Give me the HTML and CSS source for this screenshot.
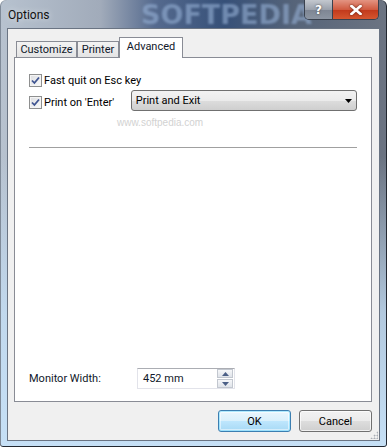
FILE: index.html
```html
<!DOCTYPE html>
<html lang="en">
<head>
    <meta charset="UTF-8">
    <title>Options</title>
    <link rel="stylesheet" href="styles.css">
</head>
<body>
    <div class="window">
        <div class="titlebar">
            <span class="title">Options</span>
            <span class="title-mark">SOFTPEDIA</span>
            <div class="caption-btns">
                <span class="cap-btn help">?</span>
                <span class="cap-btn close">
                    <svg width="12" height="10" viewBox="0 0 12 10"><path d="M1.5 1 L10.5 9 M10.5 1 L1.5 9" stroke="#fff" stroke-width="2.6" stroke-linecap="square"/></svg>
                </span>
            </div>
        </div>

        <div class="client">
            <div class="tabs">
                <div class="tab">Customize</div>
                <div class="tab">Printer</div>
                <div class="tab active">Advanced</div>
            </div>

            <div class="panel">
                <label class="check-row first">
                    <span class="checkbox"><svg width="9" height="9" viewBox="0 0 9 9"><path d="M1 4.5 L3.4 7 L8 1.5" fill="none" stroke="#3f5491" stroke-width="1.8"/></svg></span>
                    Fast quit on Esc key
                </label>
                <div class="enter-row">
                    <label class="check-row enter-label">
                        <span class="checkbox"><svg width="9" height="9" viewBox="0 0 9 9"><path d="M1 4.5 L3.4 7 L8 1.5" fill="none" stroke="#3f5491" stroke-width="1.8"/></svg></span>
                        Print on 'Enter'
                    </label>
                    <div class="combo">
                        <span>Print and Exit</span>
                        <svg class="combo-arrow" width="7" height="4" viewBox="0 0 7 4"><path d="M0 0 H7 L3.5 4 Z" fill="#000"/></svg>
                    </div>
                </div>
                <span class="mark-url">www.softpedia.com</span>
                <div class="separator"></div>
                <div class="width-row">
                    <span class="width-label">Monitor Width:</span>
                    <div class="spin">
                        <span class="spin-value">452 mm</span>
                        <div class="spin-btns">
                            <span class="spin-btn"><svg width="7" height="4" viewBox="0 0 7 4"><path d="M0 4 H7 L3.5 0 Z" fill="#4b5f86"/></svg></span>
                            <span class="spin-btn"><svg width="7" height="4" viewBox="0 0 7 4"><path d="M0 0 H7 L3.5 4 Z" fill="#4b5f86"/></svg></span>
                        </div>
                    </div>
                </div>
            </div>

            <div class="buttons">
                <button class="btn default">OK</button>
                <button class="btn">Cancel</button>
            </div>
            <span class="grip"></span>
        </div>
    </div>
</body>
</html>
```

FILE: styles.css
```css
* {
    margin: 0;
    padding: 0;
    box-sizing: border-box;
}

body {
    width: 387px;
    height: 447px;
    overflow: hidden;
    font-family: Roboto, "Liberation Sans", sans-serif;
    font-size: 11px;
    color: #000;
    background: #fff;
}

/* window frame */
.window {
    width: 387px;
    height: 447px;
    display: flex;
    flex-direction: column;
    padding: 0 7px 6px 7px;
    border-radius: 6px 6px 3px 3px;
    background:
        linear-gradient(to bottom, rgba(196, 222, 245, 0) 35%, rgba(196, 222, 245, 0.8) 70%, #c6e0f6 100%),
        linear-gradient(to right, #b7c2cf 0%, #a1abba 26%, #556a8e 40%, #365078 58%, #566479 76%, #6c7482 100%);
    box-shadow: inset -1px 0 0 #232831, inset 0 -1px 0 #232831, inset 1px 0 0 #7f8a98;
}

.titlebar {
    position: relative;
    height: 28px;
    display: flex;
    align-items: flex-start;
    padding-left: 1px;
}

.title {
    line-height: 28px;
    padding-top: 1px;
    font-size: 12px;
    color: #111;
    text-shadow: 0 0 6px rgba(255, 255, 255, 0.7);
}

.title-mark {
    position: absolute;
    left: 134px;
    top: 1px;
    font-family: "DejaVu Sans", sans-serif;
    font-size: 27px;
    line-height: 28px;
    font-weight: bold;
    color: rgba(150, 176, 214, 0.6);
    filter: blur(1.2px);
}

.caption-btns {
    position: relative;
    display: flex;
    margin-left: auto;
    margin-right: 1px;
    height: 20px;
    border: 1px solid #39414e;
    border-top: none;
    border-radius: 0 0 5px 5px;
    overflow: hidden;
}

.cap-btn {
    display: flex;
    align-items: center;
    justify-content: center;
    height: 19px;
    color: #fff;
    font-weight: bold;
}

.help {
    width: 28px;
    border-right: 1px solid #39414e;
    background: linear-gradient(to bottom, #c3c8cf 0%, #9aa1ac 50%, #7d8593 51%, #8c95a2 100%);
    font-family: "DejaVu Sans", sans-serif;
    font-size: 12px;
    text-shadow: 0 0 2px #333;
}

.close {
    width: 45px;
    background: linear-gradient(to bottom, #e39482 0%, #d05b41 50%, #c1381b 51%, #d5562f 100%);
}

.close svg {
    filter: drop-shadow(0 0 1px #5a1a0e);
}

/* client area */
.client {
    position: relative;
    height: 413px;
    display: flex;
    flex-direction: column;
    padding: 8px 7px 8px 6px;
    background: #f0f0f0;
    border: 1px solid #6a7483;
}

.tabs {
    display: flex;
    align-items: flex-end;
    height: 20px;
    padding-left: 2px;
}

.tab {
    height: 16px;
    line-height: 16px;
    text-align: center;
    white-space: nowrap;
    border: 1px solid #898c95;
    border-bottom: none;
    background: linear-gradient(to bottom, #f3f3f3, #e4e4e4);
    color: #10182a;
}

.tab:nth-child(1) {
    width: 61px;
}

.tab:nth-child(2) {
    width: 42px;
}

.tab.active {
    position: relative;
    z-index: 1;
    width: 64px;
    height: 21px;
    margin-bottom: -1px;
    line-height: 17px;
    background: #fff;
}

.panel {
    position: relative;
    height: 345px;
    display: flex;
    flex-direction: column;
    padding: 0 14px 12px 14px;
    background: #fff;
    border: 1px solid #898c95;
}

.check-row {
    display: flex;
    align-items: center;
    height: 13px;
    white-space: nowrap;
}

.check-row.first {
    margin-top: 16px;
}

.checkbox {
    display: flex;
    align-items: center;
    justify-content: center;
    width: 13px;
    height: 13px;
    margin-right: 2px;
    border: 1px solid #8e8f8f;
    background: linear-gradient(135deg, #dcdde0, #fbfbfb);
    box-shadow: inset 0 0 0 1px #f4f4f4;
}

.enter-row {
    display: flex;
    align-items: flex-start;
    margin-top: 3px;
    height: 21px;
}

.enter-label {
    width: 103px;
    margin-top: 6px;
}

.combo {
    display: flex;
    align-items: center;
    width: 229px;
    height: 21px;
    padding: 0 4px 0 4px;
    border: 1px solid #707070;
    border-radius: 3px;
    background: linear-gradient(to bottom, #f2f2f2 0%, #ebebeb 50%, #dddddd 51%, #cfcfcf 100%);
}

.combo-arrow {
    margin-left: auto;
}

.mark-url {
    align-self: flex-start;
    margin: 6px 0 0 88px;
    height: 12px;
    line-height: 12px;
    font-family: "Liberation Sans", sans-serif;
    font-size: 10px;
    color: #d2d2d2;
}

.separator {
    width: 328px;
    height: 1px;
    margin-top: 18px;
    background: #a0a0a0;
}

.width-row {
    display: flex;
    align-items: center;
    margin-top: auto;
    height: 21px;
}

.width-label {
    width: 108px;
    color: #10182a;
}

.spin {
    display: flex;
    align-items: center;
    width: 98px;
    height: 21px;
    border: 1px solid #e2e3ea;
    border-top-color: #abadb3;
    background: #fff;
}

.spin-value {
    flex: 1;
    padding-left: 5px;
    color: #10182a;
}

.spin-btns {
    display: flex;
    flex-direction: column;
    gap: 1px;
    width: 16px;
    height: 19px;
    margin-right: 1px;
}

.spin-btn {
    display: flex;
    align-items: center;
    justify-content: center;
    flex: 1;
    border: 1px solid #c2c7cf;
    background: linear-gradient(to bottom, #f6f7f9, #dfe3e9);
}

/* dialog buttons */
.buttons {
    display: flex;
    justify-content: flex-end;
    gap: 8px;
    margin-top: 8px;
}

.btn {
    width: 73px;
    height: 22px;
    font-family: inherit;
    font-size: 11px;
    color: #000;
    border: 1px solid #707070;
    border-radius: 3px;
    background: linear-gradient(to bottom, #f2f2f2 0%, #ebebeb 50%, #dddddd 51%, #cfcfcf 100%);
    box-shadow: inset 0 0 0 1px rgba(255, 255, 255, 0.7);
}

.btn.default {
    border-color: #3c7fb1;
    background: linear-gradient(to bottom, #eaf6fd 0%, #d9f0fc 50%, #bee6fd 51%, #a7d9f5 100%);
    box-shadow: inset 0 0 0 1px #48d0ff66, inset 0 0 0 2px rgba(255, 255, 255, 0.5);
}

.grip {
    position: absolute;
    right: 1px;
    bottom: 1px;
    width: 8px;
    height: 8px;
    background:
        radial-gradient(circle, #a9aeb5 0.8px, transparent 1.2px) 0 0 / 3px 3px;
    clip-path: polygon(100% 0, 100% 100%, 0 100%);
}
```
